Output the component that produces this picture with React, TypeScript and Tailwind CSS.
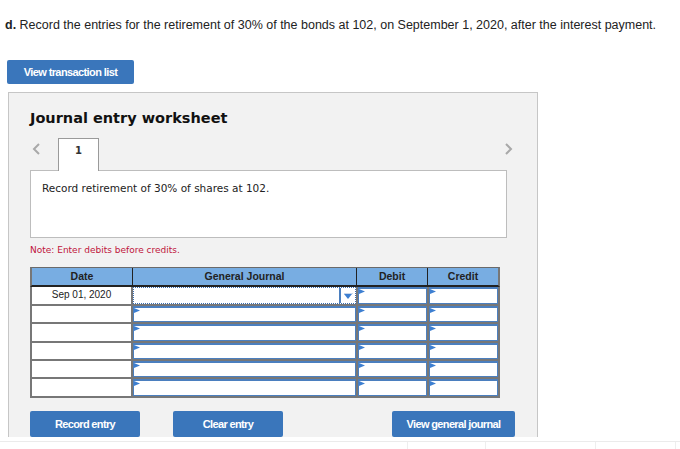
import React from 'react';

const Flag = () => (
  <svg className="absolute left-0 top-0" width="6" height="5" viewBox="0 0 6 5">
    <path d="M0 0 L6 2.5 L0 5 Z" fill="#3d7fd1" />
  </svg>
);

const Chevron = ({ dir }: { dir: 'left' | 'right' }) => (
  <svg width="9" height="12" viewBox="0 0 9 12">
    <path
      d={dir === 'left' ? 'M7 1 L2 6 L7 11' : 'M2 1 L7 6 L2 11'}
      fill="none"
      stroke="#a9a9a9"
      strokeWidth="2"
    />
  </svg>
);

const InputCell = ({ w }: { w: string }) => (
  <div className={`relative bg-white border border-t-2 border-[#4b7fbf] ${w}`}>
    <Flag />
  </div>
);

const rows = ['h-[17px]', 'h-[16px]', 'h-[17px]', 'h-[16px]', 'h-[16px]', 'h-[17px]'];

export default function App() {
  return (
    <div className="w-[680px] h-[449px] overflow-hidden bg-white font-['Liberation_Sans',Arial,sans-serif]">
      <p className="pl-[5px] pt-[18px] text-[12.5px] leading-[14px] text-[#222]">
        <b>d.</b> Record the entries for the retirement of 30% of the bonds at 102, on September 1, 2020, after the interest payment.
      </p>

      <div className="ml-[7px] mt-[28px] w-[127px] h-[24px] rounded-[2px] bg-[#3a76bb] flex items-center justify-center text-white text-[11px] font-bold tracking-[-0.6px]">
        View transaction list
      </div>

      <div className="ml-[8px] mt-[8px] w-[530px] h-[345px] border border-b-0 border-[#c6c6c6] bg-[#f2f2f2] pl-[21px] pt-[17px] flex flex-col">
        <h2 className="font-['DejaVu_Sans',Verdana,sans-serif] font-bold text-[14.5px] leading-[17px] text-[#111]">
          Journal entry worksheet
        </h2>

        <div className="mt-[11px] w-[483px] h-[32px] flex items-start">
          <div className="ml-[2px] mt-[5px]">
            <Chevron dir="left" />
          </div>
          <div className="ml-[17px] w-[41px] h-[33px] bg-white border border-b-0 border-[#9a9a9a] relative z-10 flex justify-center pt-[6px] font-['DejaVu_Sans',Verdana,sans-serif] font-bold text-[10px] leading-[12px] text-[#333]">
            1
          </div>
          <div className="ml-auto mt-[5px]">
            <Chevron dir="right" />
          </div>
        </div>

        <div className="w-[477px] h-[68px] bg-white border border-[#bdbdbd] pl-[11px] pt-[11px] font-['DejaVu_Sans',Verdana,sans-serif] text-[10.5px] leading-[12px] text-[#222]">
          Record retirement of 30% of shares at 102.
        </div>

        <p className="mt-[7px] font-['DejaVu_Sans',Verdana,sans-serif] text-[9px] leading-[11px] text-[#c0143c]">
          Note: Enter debits before credits.
        </p>

        <div className="mt-[11px] w-[470px]">
          <div className="h-[20px] flex bg-[#78ade2] border-t border-l-2 border-r-2 border-b-2 border-t-[#6a6a6a] border-l-[#777] border-r-[#777] border-b-[#222] text-[10.5px] font-bold leading-[17px] text-[#222]">
            <div className="w-[101px] border-r border-[#222] text-center">Date</div>
            <div className="w-[224px] border-r border-[#222] text-center">General Journal</div>
            <div className="w-[71px] border-r border-[#222] text-center">Debit</div>
            <div className="flex-1 text-center">Credit</div>
          </div>
          <div className="bg-[#777] px-[2px] pb-[2px] flex flex-col gap-[2px]">
            {rows.map((h, r) => (
              <div key={r} className={`${h} flex gap-[2px]`}>
                <div className="w-[99px] bg-white text-center text-[10px] leading-[16px] text-[#222]">
                  {r === 0 ? 'Sep 01, 2020' : ''}
                </div>
                {r === 0 ? (
                  <div className="relative w-[223px] bg-white border border-dotted border-[#3a6fb5]">
                    <div className="absolute right-[14px] top-0 h-[15px] w-[2px] bg-[#4b7fbf]" />
                    <div className="absolute right-[2px] top-[5px] w-[9px] h-px bg-[#c9d8ec]" />
                    <svg className="absolute right-[3px] top-[6px]" width="8" height="5" viewBox="0 0 8 5">
                      <path d="M0 0 L8 0 L4 5 Z" fill="#3d7fd1" />
                    </svg>
                  </div>
                ) : (
                  <InputCell w="w-[223px]" />
                )}
                <InputCell w="w-[69px]" />
                <InputCell w="w-[69px]" />
              </div>
            ))}
          </div>
        </div>

        <div className="mt-[13px] flex text-white text-[11px] font-bold tracking-[-0.65px]">
          <div className="w-[110px] h-[26px] rounded-[2px] bg-[#3a76bb] flex items-center justify-center">Record entry</div>
          <div className="ml-[33px] w-[110px] h-[26px] rounded-[2px] bg-[#3a76bb] flex items-center justify-center">Clear entry</div>
          <div className="ml-[109px] w-[123px] h-[26px] rounded-[2px] bg-[#3a76bb] flex items-center justify-center">View general journal</div>
        </div>
      </div>

      <div className="mt-[4px] h-px bg-[#ebebeb]" />
      <div className="h-[8px] flex">
        <div className="ml-[407px] border-l border-[#eeeeee]" />
        <div className="ml-[77px] border-l border-[#eeeeee]" />
        <div className="ml-[109px] border-l border-[#eeeeee]" />
        <div className="ml-[79px] border-l border-[#eeeeee]" />
      </div>
    </div>
  );
}
